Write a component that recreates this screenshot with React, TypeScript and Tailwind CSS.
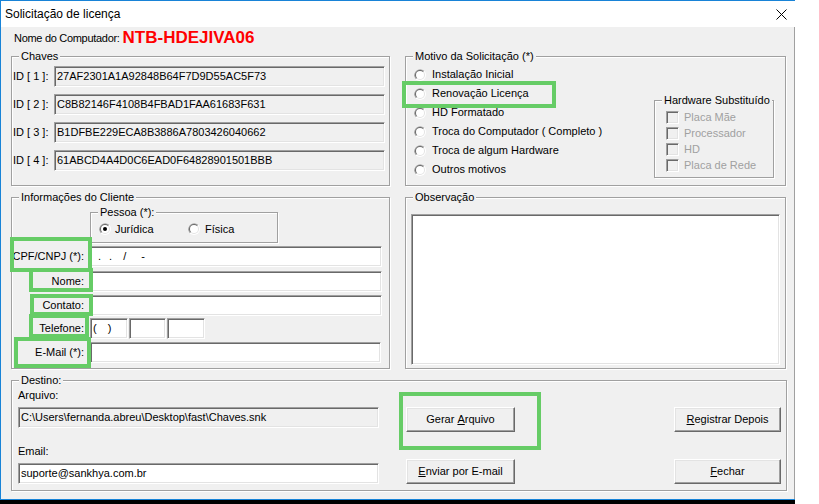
import React from "react";

const sunken =
  "border border-t-[#a0a0a0] border-l-[#a0a0a0] border-b-white border-r-white shadow-[inset_1px_1px_0_#696969,inset_-1px_-1px_0_#e3e3e3]";
const raised =
  "border border-t-white border-l-white border-b-[#696969] border-r-[#696969] shadow-[inset_-1px_-1px_0_#a0a0a0,inset_1px_1px_0_#e3e3e3]";

function Group({
  label,
  className = "",
  children,
}: {
  label: string;
  className?: string;
  children?: React.ReactNode;
}) {
  return (
    <div
      className={`relative border border-[#a0a0a0] shadow-[inset_1px_1px_0_#fff,1px_1px_0_#fff] ${className}`}
    >
      <span className="absolute -top-[7px] left-[7px] bg-[#f0f0f0] px-[2px] leading-[13px] whitespace-nowrap">
        {label}
      </span>
      {children}
    </div>
  );
}

function Radio({ checked = false }: { checked?: boolean }) {
  return (
    <svg width="12" height="12" viewBox="0 0 12 12" className="shrink-0">
      <circle cx="6" cy="6" r="6" fill="#fff" />
      <path d="M10.24 1.76A6 6 0 0 0 1.76 10.24Z" fill="#a0a0a0" />
      <circle cx="6" cy="6" r="5" fill="#e3e3e3" />
      <path d="M9.54 2.46A5 5 0 0 0 2.46 9.54Z" fill="#696969" />
      <circle cx="6" cy="6" r="4" fill="#fff" />
      {checked && <circle cx="6" cy="6" r="2" fill="#000" />}
    </svg>
  );
}

function Field({
  className = "",
  readOnly = false,
  children,
}: {
  className?: string;
  readOnly?: boolean;
  children?: React.ReactNode;
}) {
  return (
    <div
      className={`${sunken} ${readOnly ? "bg-[#f0f0f0]" : "bg-white"} flex items-center h-[21px] whitespace-nowrap ${className}`}
    >
      {children}
    </div>
  );
}

function Button({ children }: { children: React.ReactNode }) {
  return (
    <div className={`${raised} bg-[#f0f0f0] flex items-center justify-center h-[25px]`}>
      {children}
    </div>
  );
}

const ids = [
  "27AF2301A1A92848B64F7D9D55AC5F73",
  "C8B82146F4108B4FBAD1FAA61683F631",
  "B1DFBE229ECA8B3886A7803426040662",
  "61ABCD4A4D0C6EAD0F64828901501BBB",
];

const motivos = [
  "Instalação Inicial",
  "Renovação Licença",
  "HD Formatado",
  "Troca do Computador ( Completo )",
  "Troca de algum Hardware",
  "Outros motivos",
];

const hardware = ["Placa Mãe", "Processador", "HD", "Placa de Rede"];

function Mark({ className }: { className: string }) {
  return <div className={`absolute border-4 border-[#66cc66] ${className}`} />;
}

export default function App() {
  return (
    <div className="relative w-[819px] h-[504px] bg-white overflow-hidden text-[11px] text-black font-['Liberation_Sans',Arial,sans-serif]">
      <div className="w-[795px] h-[500px] border-l border-t border-b border-[#1883d7] flex flex-col">
        {/* title bar */}
        <div className="h-[26px] bg-white flex items-center justify-between pl-[4px] pr-[8px]">
          <span className="text-[12px]">Solicitação de licença</span>
          <svg width="11" height="11" viewBox="0 0 11 11">
            <path d="M0.5 0.5L10.5 10.5M10.5 0.5L0.5 10.5" stroke="#000" strokeWidth="1" />
          </svg>
        </div>

        {/* body */}
        <div className="flex-1 bg-[#f0f0f0] border-r border-[#a0a0a0] pl-[10px] flex flex-col">
          <div className="h-[20px] mt-[1px] flex items-center pl-[3px]">
            <span className="tracking-[-0.3px]">Nome do Computador:</span>
            <span className="ml-[3px] text-[17px] font-bold text-[#ff0000] leading-[20px]">
              NTB-HDEJIVA06
            </span>
          </div>

          <div className="flex mt-[8px] gap-[15px]">
            <Group label="Chaves" className="w-[379px] h-[130px]">
              <div className="flex flex-col gap-[7px] pt-[9px] pl-[1px]">
                {ids.map((id, i) => (
                  <div key={id} className="flex items-center">
                    <span className="w-[41px] whitespace-nowrap">ID [ {i + 1} ]:</span>
                    <Field readOnly className="w-[331px] pl-[2px]">
                      {id}
                    </Field>
                  </div>
                ))}
              </div>
            </Group>

            <Group label="Motivo da Solicitação (*)" className="w-[381px] h-[130px]">
              <div className="flex">
                <div className="flex flex-col pt-[8px] pl-[8px]">
                  {motivos.map((m) => (
                    <div key={m} className="h-[19px] flex items-center gap-[6px] whitespace-nowrap">
                      <Radio />
                      <span>{m}</span>
                    </div>
                  ))}
                </div>
                <Group
                  label="Hardware Substituído"
                  className="ml-auto mr-[11px] mt-[43px] w-[120px] h-[78px]"
                >
                  <div className="flex flex-col pt-[8px] pl-[11px]">
                    {hardware.map((h) => (
                      <div key={h} className="h-[16px] flex items-center gap-[5px]">
                        <div className={`${sunken} w-[13px] h-[13px] bg-[#f0f0f0]`} />
                        <span className="text-[#a0a0a0]">{h}</span>
                      </div>
                    ))}
                  </div>
                </Group>
              </div>
            </Group>
          </div>

          <div className="flex mt-[11px] gap-[15px]">
            <Group label="Informações do Cliente" className="w-[379px] h-[172px]">
              <div className="flex flex-col">
                <Group label="Pessoa (*):" className="ml-[78px] mt-[14px] w-[188px] h-[31px]">
                  <div className="flex items-center pt-[8px] pl-[8px] h-[24px]">
                    <div className="w-[89px] flex items-center gap-[4px]">
                      <Radio checked />
                      <span>Jurídica</span>
                    </div>
                    <div className="flex items-center gap-[5px]">
                      <Radio />
                      <span>Física</span>
                    </div>
                  </div>
                </Group>

                <div className="flex items-center mt-[3px]">
                  <span className="w-[72px] text-right">CPF/CNPJ (*):</span>
                  <Field className="ml-[6px] w-[292px]">
                    <span className="ml-[7px]">.</span>
                    <span className="ml-[8px]">.</span>
                    <span className="ml-[11px]">/</span>
                    <span className="ml-[15px]">-</span>
                  </Field>
                </div>
                <div className="flex items-center mt-[4px]">
                  <span className="w-[72px] text-right">Nome:</span>
                  <Field className="ml-[6px] w-[292px]" />
                </div>
                <div className="flex items-center mt-[3px]">
                  <span className="w-[72px] text-right">Contato:</span>
                  <Field className="ml-[6px] w-[292px]" />
                </div>
                <div className="flex items-center mt-[2px]">
                  <span className="w-[72px] text-right">Telefone:</span>
                  <Field className="ml-[6px] w-[38px]">
                    <span className="ml-[2px]">(</span>
                    <span className="ml-[11px]">)</span>
                  </Field>
                  <Field className="ml-[1px] w-[37px]" />
                  <Field className="ml-[1px] w-[38px]" />
                </div>
                <div className="flex items-center mt-[3px]">
                  <span className="w-[72px] text-right">E-Mail (*):</span>
                  <Field className="ml-[6px] w-[291px]" />
                </div>
              </div>
            </Group>

            <Group label="Observação" className="w-[381px] h-[172px]">
              <div className={`${sunken} bg-white ml-[5px] mt-[16px] w-[369px] h-[151px]`} />
            </Group>
          </div>

          <Group label="Destino:" className="mt-[11px] w-[776px] h-[111px]">
            <div className="flex">
              <div className="flex flex-col pl-[6px] w-[367px]">
                <span className="mt-[7px] h-[14px] leading-[14px]">Arquivo:</span>
                <Field readOnly className="mt-[5px] w-[361px] pl-[2px]">
                  C:\Users\fernanda.abreu\Desktop\fast\Chaves.snk
                </Field>
                <span className="mt-[16px] h-[14px] leading-[14px]">Email:</span>
                <Field className="mt-[5px] w-[361px] pl-[2px]">suporte@sankhya.com.br</Field>
              </div>
              <div className="flex flex-col ml-[27px] w-[109px]">
                <div className="mt-[26px]">
                  <Button>
                    Gerar <span className="underline underline-offset-[1px] ml-[3px]">A</span>rquivo
                  </Button>
                </div>
                <div className="mt-[27px]">
                  <Button>
                    <span className="underline underline-offset-[1px]">E</span>nviar por E-mail
                  </Button>
                </div>
              </div>
              <div className="flex flex-col ml-auto mr-[5px] w-[107px]">
                <div className="mt-[26px]">
                  <Button>
                    <span className="underline underline-offset-[1px]">R</span>egistrar Depois
                  </Button>
                </div>
                <div className="mt-[27px]">
                  <Button>
                    <span className="underline underline-offset-[1px]">F</span>echar
                  </Button>
                </div>
              </div>
            </div>
          </Group>
        </div>
      </div>
      <div className="w-[795px] h-[4px] bg-black" />

      {/* green annotation boxes */}
      <Mark className="left-[402px] top-[81px] w-[154px] h-[27px]" />
      <Mark className="left-[399px] top-[392px] w-[142px] h-[58px]" />
      <Mark className="left-[10px] top-[237px] w-[82px] h-[35px]" />
      <Mark className="left-[29px] top-[268px] w-[64px] h-[24px]" />
      <Mark className="left-[30px] top-[294px] w-[63px] h-[22px]" />
      <Mark className="left-[29px] top-[314px] w-[60px] h-[24px]" />
      <Mark className="left-[14px] top-[337px] w-[77px] h-[31px]" />
    </div>
  );
}
